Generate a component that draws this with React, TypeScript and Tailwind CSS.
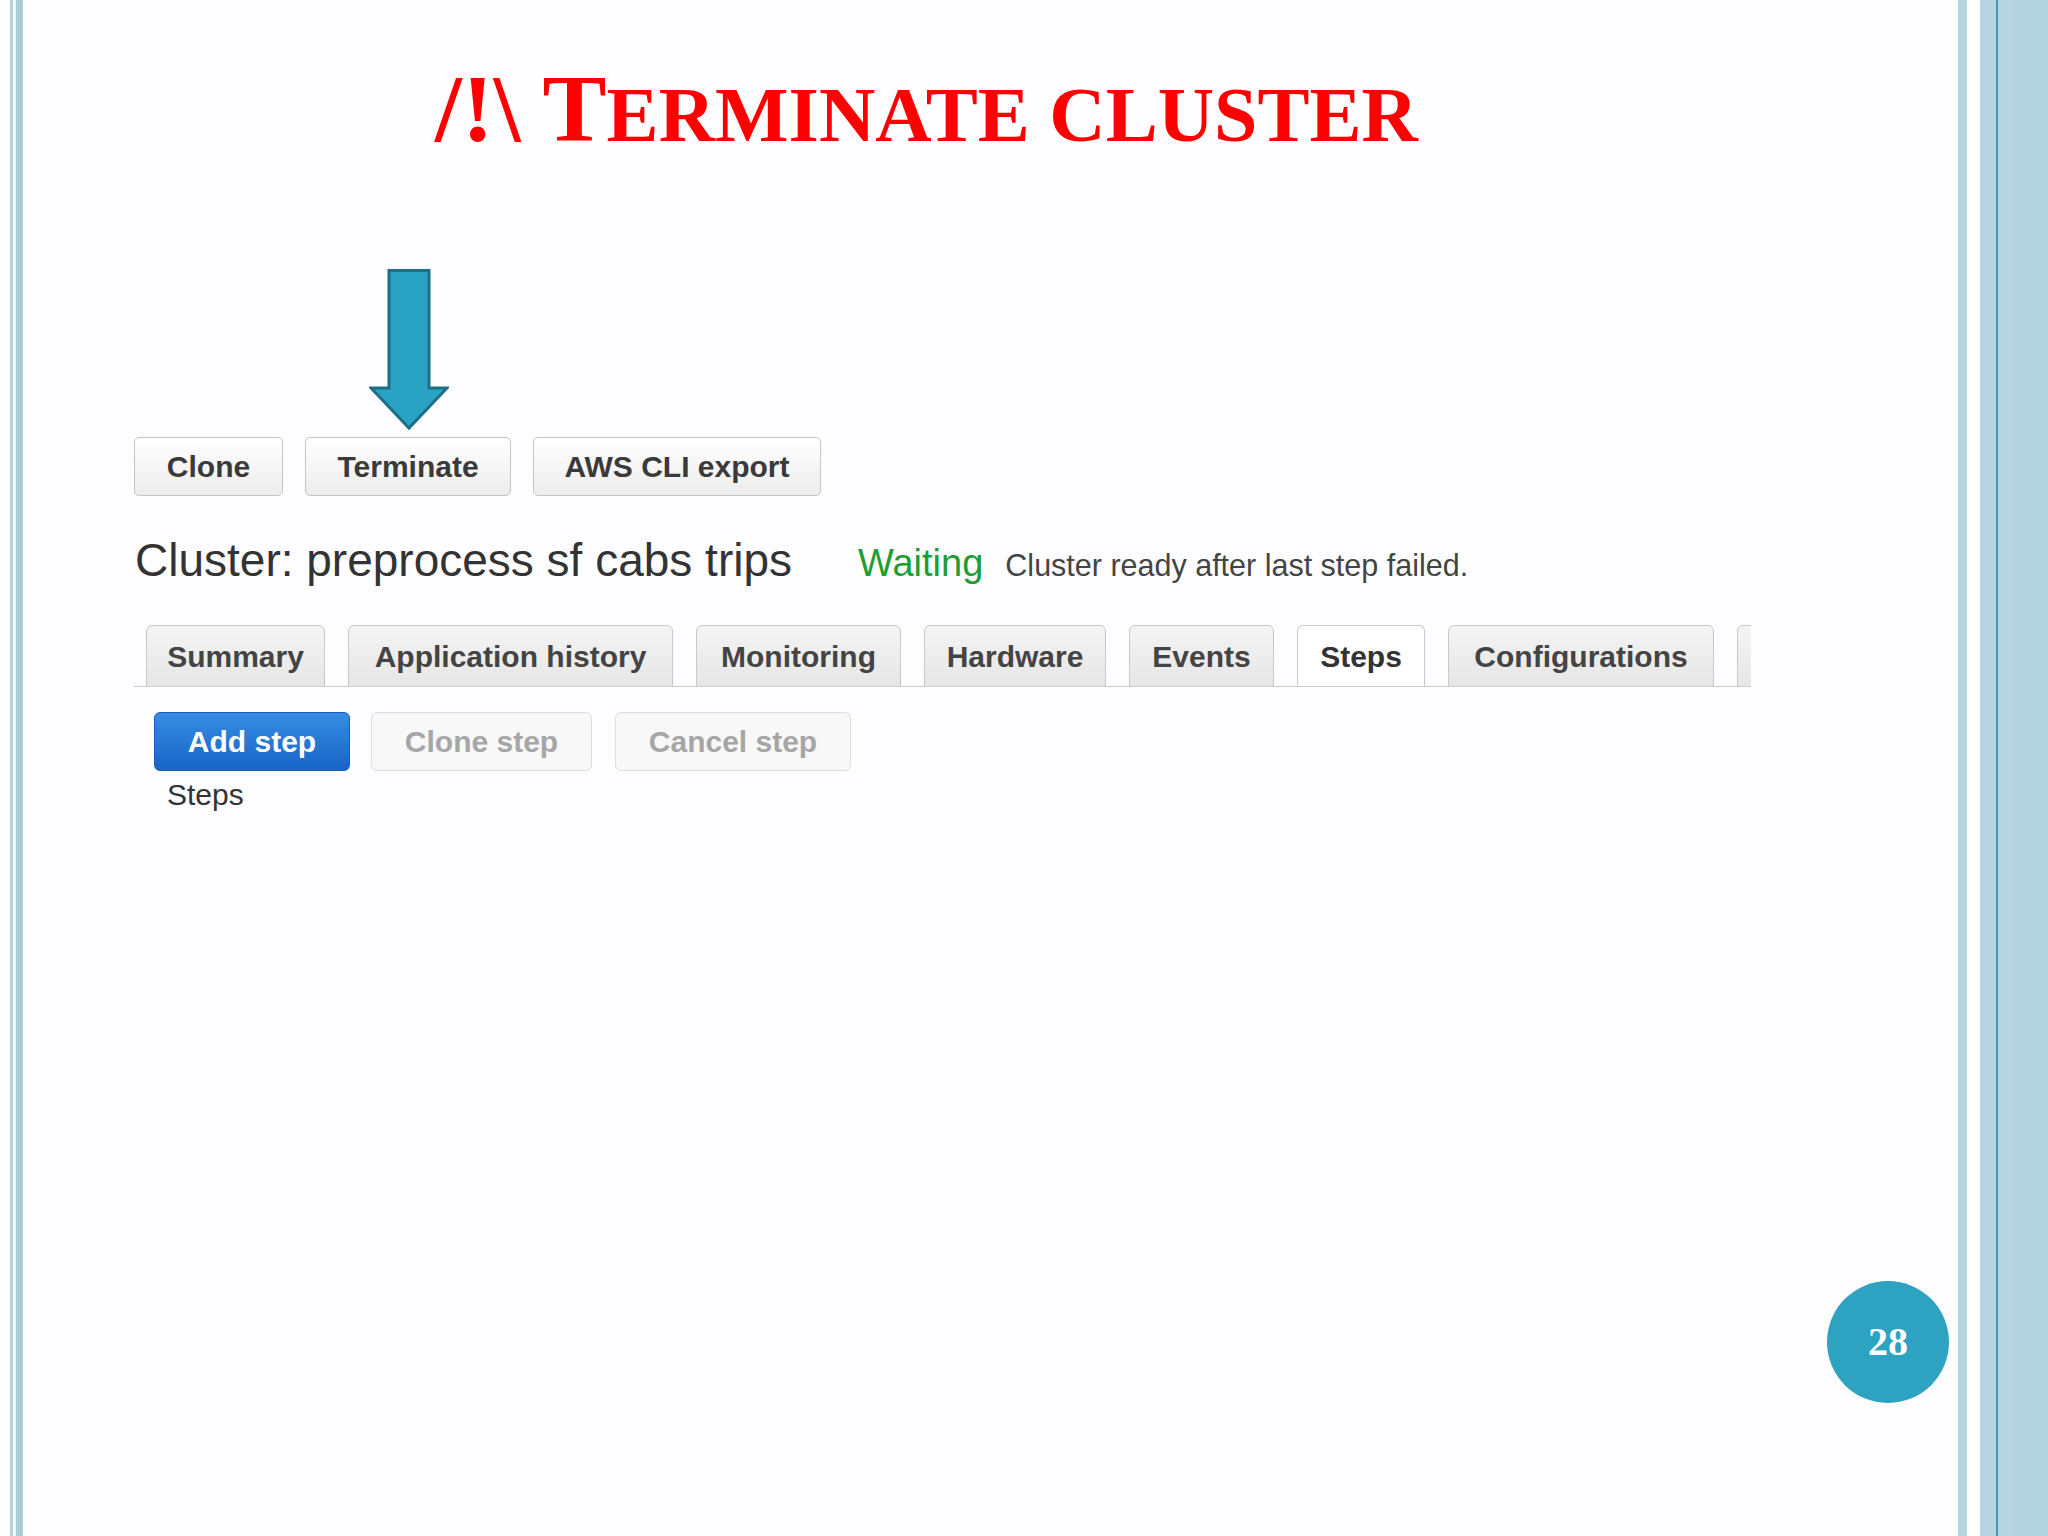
import React from 'react';

// Tabs along the cluster detail view; widths follow the slide screenshot
const tabs = [
  { label: 'Summary', width: 'w-[179px]' },
  { label: 'Application history', width: 'w-[325px]' },
  { label: 'Monitoring', width: 'w-[205px]' },
  { label: 'Hardware', width: 'w-[182px]' },
  { label: 'Events', width: 'w-[145px]' },
  { label: 'Steps', width: 'w-[128px]', active: true },
  { label: 'Configurations', width: 'w-[266px]' },
];

const ArrowDown: React.FC = () => (
  <svg width="80" height="162" viewBox="0 0 80 162" className="block">
    <polygon
      points="20,1.5 60,1.5 60,119 78,119 40,159 2,119 20,119"
      fill="#2aa2c3"
      stroke="#1d6f87"
      strokeWidth="3"
      strokeLinejoin="miter"
    />
  </svg>
);

const ToolButton: React.FC<{ label: string; width: string }> = ({ label, width }) => (
  <button
    className={`${width} h-[59px] rounded-[5px] border border-[#c4c4c4] bg-gradient-to-b from-white to-[#ececec] text-[30px] font-bold text-[#3a3a3a] flex items-center justify-center`}
  >
    {label}
  </button>
);

export default function App() {
  return (
    <div className="flex h-[1536px] w-[2048px] overflow-hidden bg-white font-['Liberation_Sans',Arial,sans-serif]">
      {/* left border lines */}
      <div className="flex h-full w-[23px] shrink-0">
        <div className="w-[10px] bg-white" />
        <div className="w-[3px] bg-[#b3d2db]" />
        <div className="w-[3px] bg-[#eef6f8]" />
        <div className="w-[7px] bg-[#a9ccd6]" />
      </div>

      {/* slide body */}
      <div className="relative h-full flex-1 bg-[#fdfdff]">
        <h1 className="pl-[412px] pt-[61px] leading-none whitespace-nowrap font-['Liberation_Serif','Times_New_Roman',serif] font-bold text-[#ff0000]">
          <span className="text-[96px]">/!\ T</span>
          <span className="text-[78px]">ERMINATE CLUSTER</span>
        </h1>

        <div className="ml-[346px] mt-[112px]">
          <ArrowDown />
        </div>

        <div className="pl-[111px]">
          <div className="mt-[6px] flex gap-[22px]">
            <ToolButton label="Clone" width="w-[149px]" />
            <ToolButton label="Terminate" width="w-[206px]" />
            <ToolButton label="AWS CLI export" width="w-[288px]" />
          </div>

          <div className="mt-[41px] flex items-baseline leading-none whitespace-nowrap">
            <span className="ml-[1px] text-[46px] text-[#333333]">Cluster: preprocess sf cabs trips</span>
            <span className="ml-[66px] text-[38px] text-[#1f9d32]">Waiting</span>
            <span className="ml-[22px] text-[30.5px] text-[#444444]">Cluster ready after last step failed.</span>
          </div>

          <div className="mt-[41px] flex h-[63px] w-[1617px] items-end gap-[23px] overflow-hidden border-b border-[#cccccc] pl-[12px]">
            {tabs.map((tab) => (
              <div
                key={tab.label}
                className={`${tab.width} -mb-px flex h-[62px] shrink-0 items-center justify-center rounded-t-[6px] border border-[#c8c8c8] text-[30px] font-bold whitespace-nowrap ${
                  tab.active
                    ? 'border-b-white bg-white text-[#333333]'
                    : 'bg-gradient-to-b from-[#f4f4f4] to-[#e6e6e6] text-[#444444]'
                }`}
              >
                {tab.label}
              </div>
            ))}
            {/* next tab, clipped by the panel edge */}
            <div className="-mb-px h-[62px] w-[200px] shrink-0 rounded-t-[6px] border border-[#c8c8c8] bg-gradient-to-b from-[#f4f4f4] to-[#e6e6e6]" />
          </div>

          <div className="ml-[20px] mt-[25px] flex gap-[21px]">
            <button className="h-[59px] w-[196px] rounded-[6px] border border-[#1a5db5] bg-gradient-to-b from-[#378de2] to-[#1764c8] text-[30px] font-bold text-white">
              Add step
            </button>
            <button className="h-[59px] w-[221px] rounded-[6px] border border-[#dddddd] bg-[#f8f8f8] text-[30px] font-bold text-[#a6a6a6]">
              Clone step
            </button>
            <button className="ml-[2px] h-[59px] w-[236px] rounded-[6px] border border-[#dddddd] bg-[#f8f8f8] text-[30px] font-bold text-[#a6a6a6]">
              Cancel step
            </button>
          </div>

          <div className="ml-[33px] mt-[9px] text-[30px] leading-none text-[#333333]">Steps</div>
        </div>

        {/* slide number */}
        <div className="absolute bottom-[133px] right-[9px] flex h-[122px] w-[122px] items-center justify-center rounded-full bg-[#2ea2c1] font-['Liberation_Serif',Georgia,serif] text-[40px] font-bold text-white">
          28
        </div>
      </div>

      {/* right border lines */}
      <div className="flex h-full w-[90px] shrink-0">
        <div className="w-[9px] bg-[#b5d4df]" />
        <div className="w-[13px] bg-white" />
        <div className="w-[16px] bg-[#b8d4e2]" />
        <div className="w-[2px] bg-[#3b9cbf]" />
        <div className="w-[14px] bg-[#b8d4e2]" />
        <div className="flex-1 bg-[#b3d3df]" />
      </div>
    </div>
  );
}
